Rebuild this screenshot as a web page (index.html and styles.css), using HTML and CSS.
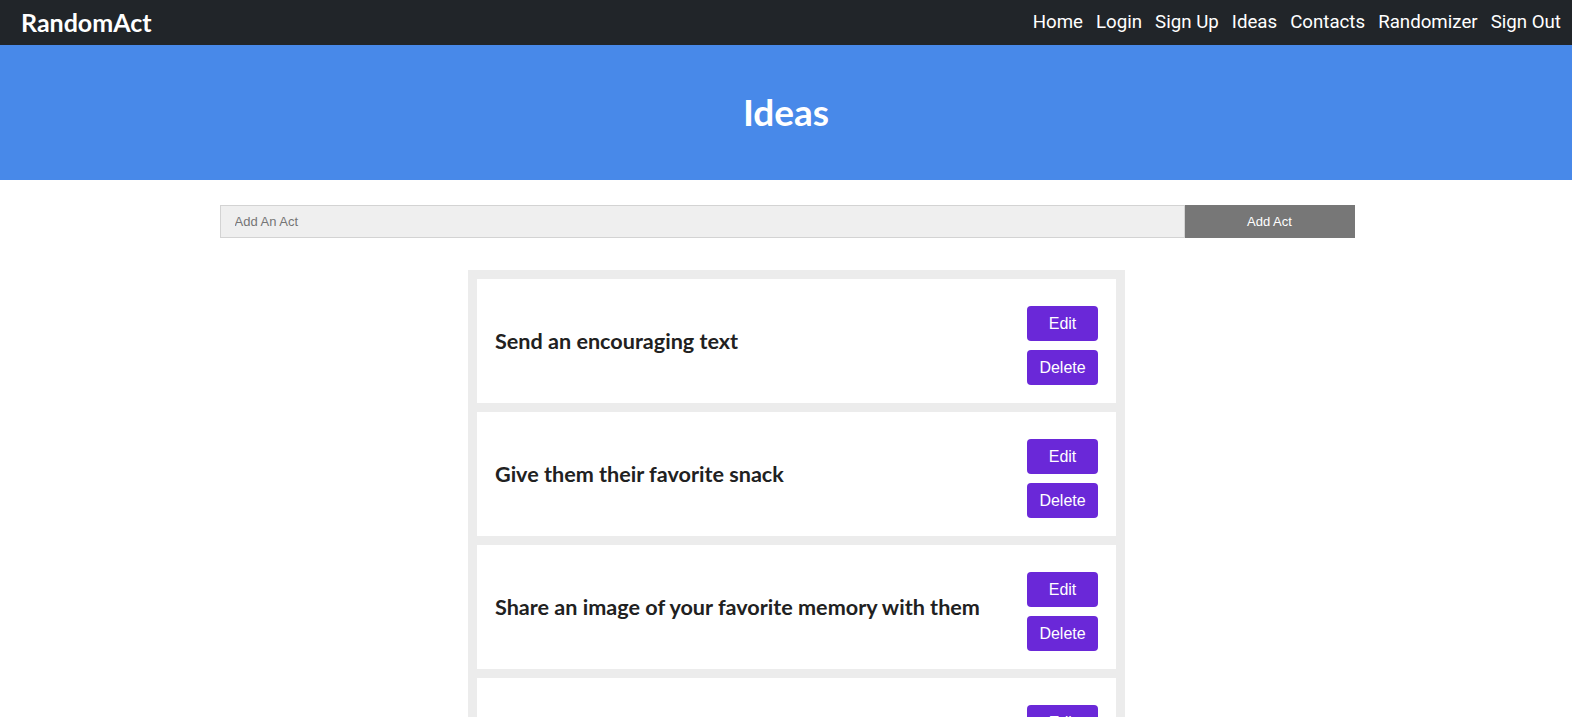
FILE: index.html
```html
<!DOCTYPE html>
<html>
<head>
<meta charset="utf-8">
<link rel="stylesheet" href="styles.css">
</head>
<body>
<nav class="navbar">
  <a class="brand" href="#">RandomAct</a>
  <ul class="nav-links">
    <li><a href="#">Home</a></li>
    <li><a href="#">Login</a></li>
    <li><a href="#">Sign Up</a></li>
    <li><a href="#">Ideas</a></li>
    <li><a href="#">Contacts</a></li>
    <li><a href="#">Randomizer</a></li>
    <li><a href="#">Sign Out</a></li>
  </ul>
</nav>
<header class="hero">
  <h1>Ideas</h1>
</header>
<main class="main">
  <form class="add-form">
    <input class="add-input" type="text" placeholder="Add An Act">
    <button class="add-btn" type="button">Add Act</button>
  </form>
  <section class="list">
    <div class="card">
      <h2 class="card-title">Send an encouraging text</h2>
      <div class="actions"><button class="btn">Edit</button><button class="btn">Delete</button></div>
    </div>
    <div class="card">
      <h2 class="card-title">Give them their favorite snack</h2>
      <div class="actions"><button class="btn">Edit</button><button class="btn">Delete</button></div>
    </div>
    <div class="card">
      <h2 class="card-title">Share an image of your favorite memory with them</h2>
      <div class="actions"><button class="btn">Edit</button><button class="btn">Delete</button></div>
    </div>
    <div class="card">
      <h2 class="card-title">Write them a handwritten note</h2>
      <div class="actions"><button class="btn">Edit</button><button class="btn">Delete</button></div>
    </div>
  </section>
</main>
</body>
</html>
```

FILE: styles.css
```css
* { box-sizing: border-box; }
body {
  margin: 0;
  font-family: Lato, "Liberation Sans", sans-serif;
  background: #fff;
}
.navbar {
  height: 45px;
  background: #212529;
  display: flex;
  align-items: center;
  justify-content: space-between;
  padding: 0 11px 2px 21px;
}
.brand {
  color: #fff;
  text-decoration: none;
  font-family: Lato, sans-serif;
  font-weight: 700;
  font-size: 25px;
}
.nav-links {
  list-style: none;
  margin: 0;
  padding: 0;
  display: flex;
  gap: 13px;
}
.nav-links a {
  color: #fff;
  text-decoration: none;
  font-family: Roboto, sans-serif;
  font-size: 18.7px;
}
.hero {
  height: 135px;
  background: #4889e9;
  display: flex;
  align-items: center;
  justify-content: center;
}
.hero h1 {
  margin: 0 0 2px;
  color: #fff;
  font-family: Lato, sans-serif;
  font-weight: 700;
  font-size: 37px;
}
.main {
  display: flex;
  flex-direction: column;
  align-items: center;
  padding-top: 25px;
}
.add-form {
  display: flex;
  width: 1135px;
  margin: 0 0 32px 2px;
}
.add-input {
  flex: 1;
  height: 33px;
  border: 1px solid #d3d3d3;
  background: #efefef;
  padding: 0 14px;
  font-family: "Liberation Sans", Arial, sans-serif;
  font-size: 13px;
  color: #333;
  outline: none;
}
.add-input::placeholder { color: #757575; }
.add-btn {
  width: 170px;
  height: 33px;
  border: none;
  background: #777;
  color: #fff;
  font-family: "Liberation Sans", Arial, sans-serif;
  font-size: 13px;
}
.list {
  width: 657px;
  background: #ececec;
  padding: 9px;
  display: flex;
  flex-direction: column;
  gap: 9px;
  margin-left: 21px;
}
.card {
  background: #fff;
  padding: 18px;
  display: flex;
  align-items: center;
  justify-content: space-between;
}
.card-title {
  margin: 0;
  font-family: Lato, sans-serif;
  font-weight: 700;
  font-size: 21.6px;
  color: #212121;
}
.actions {
  display: flex;
  flex-direction: column;
}
.btn {
  margin-top: 9px;
  width: 71px;
  height: 35px;
  border: none;
  border-radius: 4px;
  background: #6a28d8;
  color: #fff;
  font-family: "Liberation Sans", Arial, sans-serif;
  font-size: 16px;
}
```
